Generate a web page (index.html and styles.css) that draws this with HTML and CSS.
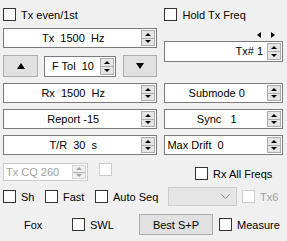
FILE: index.html
```html
<!DOCTYPE html>
<html lang="en">
<head>
    <meta charset="UTF-8">
    <title>Tx Controls</title>
    <link rel="stylesheet" href="styles.css">
</head>
<body>
    <div class="panel">
        <div class="top">
            <div class="col left">
                <label class="check"><span class="box"></span>Tx even/1st</label>
                <div class="spin tx"><span class="val">Tx  1500  Hz</span><span class="arrows"><i class="up"></i><i class="dn"></i></span></div>
                <div class="btnrow">
                    <button class="btn tri"><svg width="8" height="6" viewBox="0 0 8 6"><polygon points="4,0 8,6 0,6" fill="#000"/></svg></button>
                    <div class="spin ftol"><span class="val">F Tol  10</span><span class="arrows"><i class="up"></i><i class="dn"></i></span></div>
                    <button class="btn tri"><svg width="8" height="6" viewBox="0 0 8 6"><polygon points="0,0 8,0 4,6" fill="#000"/></svg></button>
                </div>
                <div class="spin gap6"><span class="val">Rx  1500  Hz</span><span class="arrows"><i class="up"></i><i class="dn"></i></span></div>
                <div class="spin gap6"><span class="val">Report -15</span><span class="arrows"><i class="up"></i><i class="dn"></i></span></div>
                <div class="spin gap6"><span class="val">T/R  30  s</span><span class="arrows"><i class="up"></i><i class="dn"></i></span></div>
            </div>
            <div class="col right">
                <label class="check"><span class="box"></span>Hold Tx Freq</label>
                <div class="lr">
                    <svg width="5" height="6" viewBox="0 0 5 6"><polygon points="5,0 5,6 1,3" fill="#000"/></svg>
                    <svg width="5" height="6" viewBox="0 0 5 6"><polygon points="0,0 4,3 0,6" fill="#000"/></svg>
                </div>
                <div class="spin txnum"><span class="val end">Tx# 1</span><span class="arrows"><i class="up"></i><i class="dn"></i></span></div>
                <div class="spin sub"><span class="val">Submode 0</span><span class="arrows"><i class="up"></i><i class="dn"></i></span></div>
                <div class="spin gap6"><span class="val">Sync   1</span><span class="arrows"><i class="up"></i><i class="dn"></i></span></div>
                <div class="spin gap6"><span class="val start">Max Drift  0</span><span class="arrows"><i class="up"></i><i class="dn"></i></span></div>
            </div>
        </div>

        <div class="row r-cq">
            <div class="spin off cq"><span class="val start">Tx CQ 260</span><span class="arrows"><i class="up"></i><i class="dn"></i></span></div>
            <span class="box off solo"></span>
            <label class="check allfreq"><span class="box"></span>Rx All Freqs</label>
        </div>

        <div class="row r-seq">
            <label class="check w-sh"><span class="box"></span>Sh</label>
            <label class="check w-fast"><span class="box"></span>Fast</label>
            <label class="check w-auto"><span class="box"></span>Auto Seq</label>
            <div class="combo"><svg width="9" height="5" viewBox="0 0 9 5"><polyline points="0.5,0.5 4.5,4.5 8.5,0.5" fill="none" stroke="#8a8a8a"/></svg></div>
            <label class="check off"><span class="box"></span>Tx6</label>
        </div>

        <div class="row r-fox">
            <span class="fox">Fox</span>
            <label class="check w-swl"><span class="box"></span>SWL</label>
            <button class="btn best">Best S+P</button>
            <label class="check"><span class="box"></span>Measure</label>
        </div>
    </div>
</body>
</html>
```

FILE: styles.css
```css
body {
    margin: 0;
    background-color: #f0f0f0;
    font-family: "Liberation Sans", Arial, sans-serif;
    font-size: 11px;
    color: #000;
}

.panel {
    width: 287px;
    height: 241px;
    padding: 0 4px 0 3px;
    box-sizing: border-box;
}

.top {
    display: flex;
    gap: 7px;
}

.col {
    display: flex;
    flex-direction: column;
}

.left {
    width: 155px;
}

.right {
    width: 119px;
}

/* checkboxes */
.check {
    display: flex;
    align-items: center;
    height: 13px;
    white-space: nowrap;
}

.col > .check {
    margin-top: 8px;
}

.box {
    width: 13px;
    height: 13px;
    box-sizing: border-box;
    border: 1px solid #333;
    background-color: #fff;
    margin-right: 5px;
    flex: none;
}

.off {
    color: #a0a0a0;
}

.box.off,
.off .box {
    border-color: #cccccc;
}

/* spin boxes */
.spin {
    display: flex;
    height: 20px;
    box-sizing: border-box;
    border: 1px solid #7a7a7a;
    background-color: #fff;
    padding: 1px;
}

.spin .val {
    flex: 1;
    text-align: center;
    line-height: 16px;
    white-space: pre;
}

.spin .val.start {
    text-align: left;
    padding-left: 1px;
}

.spin .val.end {
    text-align: right;
    padding-right: 4px;
}

.arrows {
    width: 14px;
    display: flex;
    flex-direction: column;
    border: 1px solid #adadad;
    box-sizing: border-box;
    background-color: #e5e5e5;
}

.arrows i {
    flex: 1;
    display: flex;
    align-items: center;
    justify-content: center;
}

.arrows i + i {
    border-top: 1px solid #adadad;
}

.arrows i::before {
    content: "";
    border-left: 3px solid transparent;
    border-right: 3px solid transparent;
}

.arrows .up::before {
    border-bottom: 3px solid #000;
}

.arrows .dn::before {
    border-top: 3px solid #000;
}

.off.spin {
    border-color: #cccccc;
}

.off .arrows {
    border-color: #d4d4d4;
    background-color: #f0f0f0;
}

.off .arrows .up::before {
    border-bottom-color: #a0a0a0;
}

.off .arrows .dn::before {
    border-top-color: #a0a0a0;
}

.tx {
    margin-top: 7px;
}

.gap6 {
    margin-top: 6px;
}

/* buttons */
.btn {
    font: inherit;
    color: #000;
    background-color: #e1e1e1;
    border: 1px solid #adadad;
    padding: 0;
    margin: 0;
}

.btnrow {
    display: flex;
    align-items: flex-start;
    margin-top: 7px;
    height: 22px;
}

.tri {
    width: 35px;
    height: 22px;
    display: flex;
    align-items: center;
    justify-content: center;
}

.btnrow .tri:last-child {
    width: 34px;
    margin-left: 7px;
}

.ftol {
    width: 72px;
    height: 21px;
    margin-left: 6px;
    margin-top: 1px;
}

.lr {
    display: flex;
    justify-content: flex-end;
    gap: 10px;
    margin-top: 11px;
    padding-right: 7px;
    height: 6px;
}

.txnum {
    margin-top: 3px;
    height: 21px;
}

.sub {
    margin-top: 21px;
}

/* bottom rows */
.row {
    display: flex;
    align-items: center;
}

.r-cq {
    align-items: flex-start;
    margin-top: 8px;
    height: 18px;
}

.cq {
    width: 85px;
    height: 18px;
}

.cq .val {
    line-height: 14px;
}

.solo {
    margin-left: 11px;
}

.allfreq {
    margin-left: 78px;
    margin-top: 4px;
}

.r-seq {
    margin-top: 6px;
    height: 19px;
}

.w-sh {
    width: 42px;
}

.w-fast {
    width: 50px;
}

.w-auto {
    width: 73px;
}

.combo {
    width: 69px;
    height: 19px;
    box-sizing: border-box;
    border: 1px solid #cccccc;
    background-color: #e5e5e5;
    display: flex;
    align-items: center;
    justify-content: flex-end;
    padding-right: 6px;
    margin-right: 5px;
}

.r-fox {
    margin-top: 8px;
    height: 21px;
}

.fox {
    width: 48px;
    padding-left: 21px;
}

.w-swl {
    width: 67px;
}

.best {
    width: 74px;
    height: 21px;
    margin-right: 6px;
}
```
